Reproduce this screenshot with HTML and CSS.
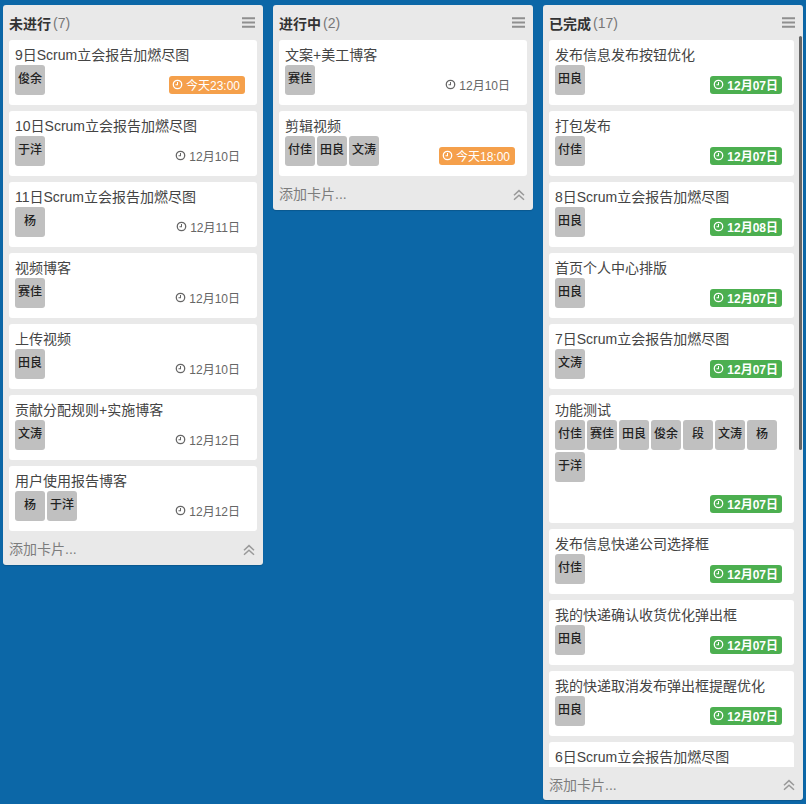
FILE: index.html

```html
<!DOCTYPE html>
<html lang="zh-CN">
<head>
  <meta charset="UTF-8">
  <meta name="viewport" content="width=device-width, initial-scale=1.0">
  <title>看板</title>
  <link rel="stylesheet" href="styles.css">
</head>
<body>
  <svg class="defs" width="0" height="0">
    <symbol id="clock" viewBox="0 0 12 12">
      <circle cx="6" cy="6" r="4.6" fill="none" stroke="currentColor" stroke-width="1.4"/>
      <path d="M6 3.4V6.3H3.8" fill="none" stroke="currentColor" stroke-width="1.1"/>
    </symbol>
    <symbol id="menu" viewBox="0 0 13 11">
      <path d="M0 1.2H13M0 5.5H13M0 9.8H13" fill="none" stroke="currentColor" stroke-width="2"/>
    </symbol>
    <symbol id="fold" viewBox="0 0 12 12">
      <path d="M1 6.2L6 1.6L11 6.2M1 10.8L6 6.2L11 10.8" fill="none" stroke="currentColor" stroke-width="1.5"/>
    </symbol>
  </svg>

  <div class="board">
    <section class="list">
      <header class="list-head">
        <h2>未进行</h2><span class="count">(7)</span>
        <svg class="menu-icon"><use href="#menu"/></svg>
      </header>
      <div class="cards">
        <article class="card">
          <div class="title">9日Scrum立会报告加燃尽图</div>
          <div class="foot">
            <div class="members"><span class="member">俊余</span></div>
            <span class="due soon"><svg class="clock"><use href="#clock"/></svg>今天23:00</span>
          </div>
        </article>
        <article class="card">
          <div class="title">10日Scrum立会报告加燃尽图</div>
          <div class="foot">
            <div class="members"><span class="member">于洋</span></div>
            <span class="due"><svg class="clock"><use href="#clock"/></svg>12月10日</span>
          </div>
        </article>
        <article class="card">
          <div class="title">11日Scrum立会报告加燃尽图</div>
          <div class="foot">
            <div class="members"><span class="member">杨</span></div>
            <span class="due"><svg class="clock"><use href="#clock"/></svg>12月11日</span>
          </div>
        </article>
        <article class="card">
          <div class="title">视频博客</div>
          <div class="foot">
            <div class="members"><span class="member">赛佳</span></div>
            <span class="due"><svg class="clock"><use href="#clock"/></svg>12月10日</span>
          </div>
        </article>
        <article class="card">
          <div class="title">上传视频</div>
          <div class="foot">
            <div class="members"><span class="member">田良</span></div>
            <span class="due"><svg class="clock"><use href="#clock"/></svg>12月10日</span>
          </div>
        </article>
        <article class="card">
          <div class="title">贡献分配规则+实施博客</div>
          <div class="foot">
            <div class="members"><span class="member">文涛</span></div>
            <span class="due"><svg class="clock"><use href="#clock"/></svg>12月12日</span>
          </div>
        </article>
        <article class="card">
          <div class="title">用户使用报告博客</div>
          <div class="foot">
            <div class="members"><span class="member">杨</span><span class="member">于洋</span></div>
            <span class="due"><svg class="clock"><use href="#clock"/></svg>12月12日</span>
          </div>
        </article>
      </div>
      <footer class="list-foot">
        <span>添加卡片...</span>
        <svg class="fold-icon"><use href="#fold"/></svg>
      </footer>
    </section>

    <section class="list">
      <header class="list-head">
        <h2>进行中</h2><span class="count">(2)</span>
        <svg class="menu-icon"><use href="#menu"/></svg>
      </header>
      <div class="cards">
        <article class="card">
          <div class="title">文案+美工博客</div>
          <div class="foot">
            <div class="members"><span class="member">赛佳</span></div>
            <span class="due"><svg class="clock"><use href="#clock"/></svg>12月10日</span>
          </div>
        </article>
        <article class="card">
          <div class="title">剪辑视频</div>
          <div class="foot">
            <div class="members"><span class="member">付佳</span><span class="member">田良</span><span class="member">文涛</span></div>
            <span class="due soon"><svg class="clock"><use href="#clock"/></svg>今天18:00</span>
          </div>
        </article>
      </div>
      <footer class="list-foot">
        <span>添加卡片...</span>
        <svg class="fold-icon"><use href="#fold"/></svg>
      </footer>
    </section>

    <section class="list list-scroll">
      <header class="list-head">
        <h2>已完成</h2><span class="count">(17)</span>
        <svg class="menu-icon"><use href="#menu"/></svg>
      </header>
      <div class="cards">
        <article class="card">
          <div class="title">发布信息发布按钮优化</div>
          <div class="foot">
            <div class="members"><span class="member">田良</span></div>
            <span class="due done"><svg class="clock"><use href="#clock"/></svg>12月07日</span>
          </div>
        </article>
        <article class="card">
          <div class="title">打包发布</div>
          <div class="foot">
            <div class="members"><span class="member">付佳</span></div>
            <span class="due done"><svg class="clock"><use href="#clock"/></svg>12月07日</span>
          </div>
        </article>
        <article class="card">
          <div class="title">8日Scrum立会报告加燃尽图</div>
          <div class="foot">
            <div class="members"><span class="member">田良</span></div>
            <span class="due done"><svg class="clock"><use href="#clock"/></svg>12月08日</span>
          </div>
        </article>
        <article class="card">
          <div class="title">首页个人中心排版</div>
          <div class="foot">
            <div class="members"><span class="member">田良</span></div>
            <span class="due done"><svg class="clock"><use href="#clock"/></svg>12月07日</span>
          </div>
        </article>
        <article class="card">
          <div class="title">7日Scrum立会报告加燃尽图</div>
          <div class="foot">
            <div class="members"><span class="member">文涛</span></div>
            <span class="due done"><svg class="clock"><use href="#clock"/></svg>12月07日</span>
          </div>
        </article>
        <article class="card">
          <div class="title">功能测试</div>
          <div class="foot">
            <div class="members">
              <span class="member">付佳</span><span class="member">赛佳</span><span class="member">田良</span><span class="member">俊余</span><span class="member">段</span><span class="member">文涛</span><span class="member">杨</span><span class="member">于洋</span>
            </div>
            <span class="due done"><svg class="clock"><use href="#clock"/></svg>12月07日</span>
          </div>
        </article>
        <article class="card">
          <div class="title">发布信息快递公司选择框</div>
          <div class="foot">
            <div class="members"><span class="member">付佳</span></div>
            <span class="due done"><svg class="clock"><use href="#clock"/></svg>12月07日</span>
          </div>
        </article>
        <article class="card">
          <div class="title">我的快递确认收货优化弹出框</div>
          <div class="foot">
            <div class="members"><span class="member">田良</span></div>
            <span class="due done"><svg class="clock"><use href="#clock"/></svg>12月07日</span>
          </div>
        </article>
        <article class="card">
          <div class="title">我的快递取消发布弹出框提醒优化</div>
          <div class="foot">
            <div class="members"><span class="member">田良</span></div>
            <span class="due done"><svg class="clock"><use href="#clock"/></svg>12月07日</span>
          </div>
        </article>
        <article class="card">
          <div class="title">6日Scrum立会报告加燃尽图</div>
        </article>
      </div>
      <div class="scroll-thumb"></div>
      <footer class="list-foot">
        <span>添加卡片...</span>
        <svg class="fold-icon"><use href="#fold"/></svg>
      </footer>
    </section>
  </div>
</body>
</html>
```

FILE: styles.css

```css
html, body {
  height: 100%;
}
body {
  margin: 0;
  background-color: #0c67a7;
  font-family: "Liberation Sans", "Noto Sans CJK SC", sans-serif;
  color: #333;
  overflow: hidden;
}
.defs {
  position: absolute;
}
.board {
  display: flex;
  align-items: flex-start;
  gap: 10px;
  padding: 5px 0 0 3px;
}
.list {
  position: relative;
  display: flex;
  flex-direction: column;
  flex: none;
  width: 260px;
  max-height: 795px;
  background: #e9e9e9;
  border-radius: 3px;
  box-shadow: 0 1px 1px rgba(0,0,0,0.15);
}
.list-head {
  display: flex;
  align-items: center;
  height: 35px;
  padding: 0 8px 0 6px;
  flex: none;
}
.list-head h2 {
  margin: 0;
  font-size: 14px;
  font-weight: bold;
  color: #333;
}
.count {
  margin-left: 2px;
  font-size: 14px;
  color: #777;
}
.menu-icon {
  width: 13px;
  height: 11px;
  margin-left: auto;
  margin-top: -1px;
  color: #8f8f8f;
}
.cards {
  display: flex;
  flex-direction: column;
  gap: 6px;
  padding: 0 6px;
  min-height: 0;
  overflow: hidden;
}
.list-scroll .cards {
  flex: 1;
  padding-right: 9px;
}
.card {
  flex: none;
  padding: 6px 12px 8px 6px;
  background: #fff;
  border-radius: 3px;
}
.title {
  font-size: 14px;
  line-height: 19px;
  color: #444;
}
.foot {
  display: flex;
  flex-wrap: wrap;
  justify-content: space-between;
}
.members {
  display: flex;
  flex-wrap: wrap;
  gap: 2px;
  padding-bottom: 2px;
}
.member {
  width: 30px;
  height: 30px;
  background: #c0c0c0;
  border-radius: 3px;
  font-size: 12px;
  font-weight: 500;
  line-height: 29px;
  text-align: center;
  color: #222;
}
.due {
  display: flex;
  align-items: center;
  height: 18px;
  margin: 11px 0 2px auto;
  padding: 0 5px 1px 4px;
  box-sizing: border-box;
  border-radius: 3px;
  font-size: 12px;
  color: #666;
}
.clock {
  width: 11px;
  height: 11px;
  margin-right: 3px;
}
.due.soon {
  padding-left: 3px;
  background: #f5a04b;
  color: #fff;
}
.due.done {
  padding: 0 4px 1px 3px;
  background: #4caf50;
  color: #fff;
  font-weight: bold;
}
.list-foot {
  display: flex;
  align-items: center;
  justify-content: space-between;
  flex: none;
  height: 34px;
  padding: 0 8px 0 6px;
  font-size: 14px;
  color: #7d7d7d;
}
.list-scroll .list-foot {
  height: 33px;
}
.fold-icon {
  width: 12px;
  height: 12px;
  margin-top: 3px;
  color: #999;
}
.scroll-thumb {
  position: absolute;
  top: 31px;
  right: 1px;
  width: 3px;
  height: 414px;
  background: #666;
  border-radius: 2px;
}
```
